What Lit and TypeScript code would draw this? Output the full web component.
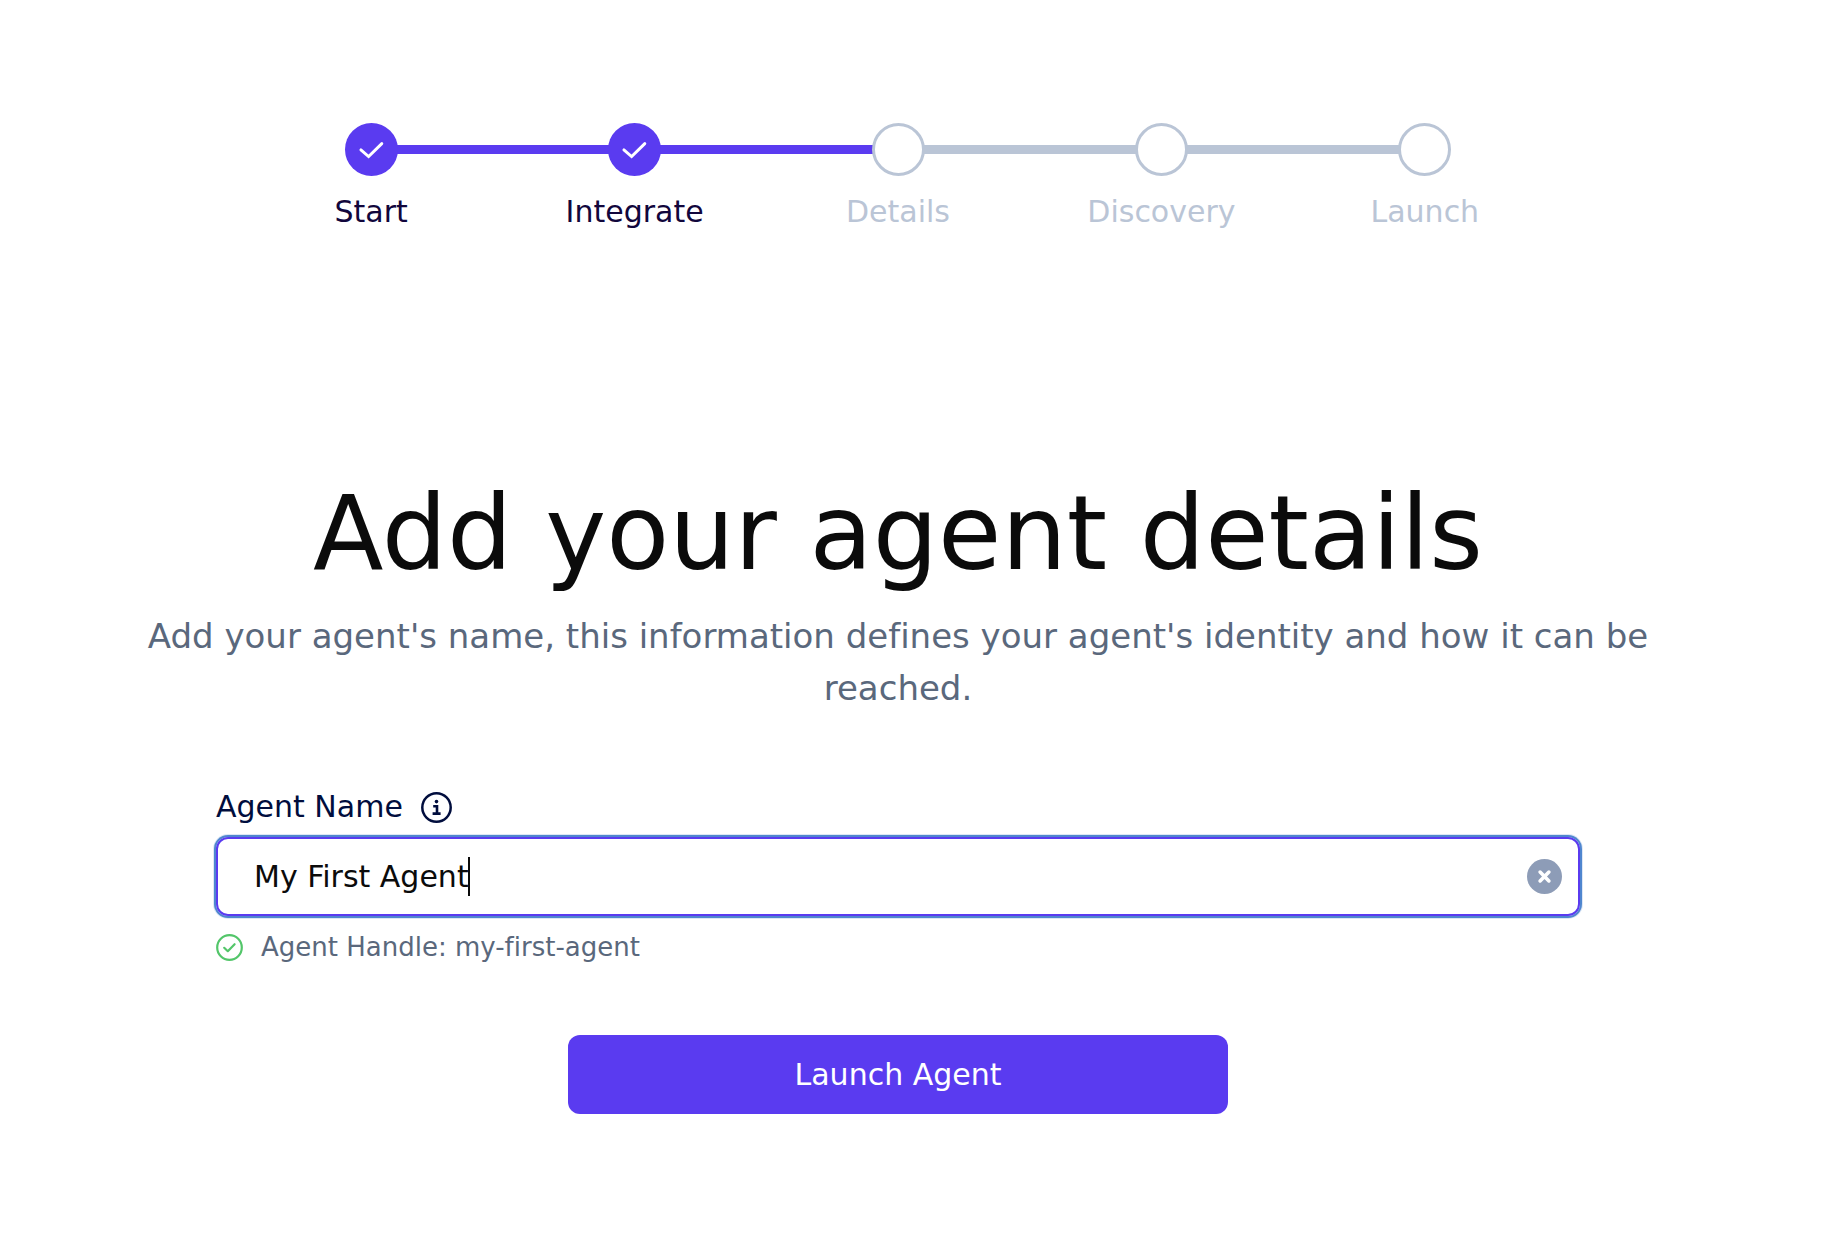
import { LitElement, html, css } from "lit";
import { customElement, state, query } from "lit/decorators.js";
import { classMap } from "lit/directives/class-map.js";
import { styleMap } from "lit/directives/style-map.js";

const FONT = '"DejaVu Sans", sans-serif';

@customElement("step-progress")
export class StepProgress extends LitElement {
  static properties = {
    steps: { attribute: false },
    completed: { type: Number },
  };

  declare steps: string[];
  declare completed: number;

  constructor() {
    super();
    this.steps = [];
    this.completed = 0;
  }

  static styles = css`
    :host {
      display: block;
      width: 100%;
      max-width: 1317px;
    }
    .steps {
      display: flex;
      margin: 0;
      padding: 0;
      list-style: none;
    }
    .step {
      display: flex;
      flex: 1 1 0;
      flex-direction: column;
      gap: 16px;
      min-width: 0;
      color: #bac5d6;
      text-align: center;
    }
    .step.done {
      color: #11063c;
    }
    .track {
      display: flex;
      align-items: center;
    }
    .line {
      flex: 1;
      height: 9px;
      background: #bac5d6;
    }
    .line.filled {
      background: #5a3bf0;
    }
    .line.none {
      background: transparent;
    }
    .dot {
      box-sizing: border-box;
      width: 53px;
      height: 53px;
      margin: 0 -2px;
      border: 3px solid #bac5d6;
      border-radius: 50%;
      background: #fff;
      z-index: 1;
    }
    .done .dot {
      border: 0;
      background: #5a3bf0;
    }
    .dot svg {
      display: block;
      width: 53px;
      height: 53px;
    }
    .name {
      font-size: 30px;
      line-height: 40px;
    }
  `;

  render() {
    const last = this.steps.length - 1;
    return html`
      <ol class="steps">
        ${this.steps.map((name, i) => {
          const done = i < this.completed;
          return html`
            <li class=${classMap({ step: true, done })}>
              <div class="track">
                <span class=${classMap({ line: true, filled: i <= this.completed, none: i === 0 })}></span>
                <span class="dot">
                  ${done
                    ? html`<svg viewBox="0 0 53 53" aria-hidden="true">
                        <path d="M15.9 26.9 23.6 33.6 36.8 20.6" fill="none" stroke="#fff" stroke-width="2.9" stroke-linecap="round" />
                      </svg>`
                    : null}
                </span>
                <span class=${classMap({ line: true, filled: done, none: i === last })}></span>
              </div>
              <span class="name">${name}</span>
            </li>
          `;
        })}
      </ol>
    `;
  }
}

@customElement("app-root")
export class AppRoot extends LitElement {
  @state() private name = "My First Agent";
  @state() private caret = 0;
  @query("input") private field!: HTMLInputElement;

  static styles = css`
    :host {
      display: block;
      background: #fff;
      font-family: "DejaVu Sans", sans-serif;
      font-variant-ligatures: none;
    }
    .page {
      display: flex;
      flex-direction: column;
      align-items: center;
      box-sizing: border-box;
      min-height: 100vh;
      padding: 123px 27px 40px 0;
    }
    .title {
      margin: 241px 0 17px;
      color: #0b0b0b;
      font-size: 103px;
      font-weight: 400;
      line-height: 120px;
      text-align: center;
    }
    .intro {
      max-width: 1540px;
      margin: 0;
      color: #5a687c;
      font-size: 34px;
      line-height: 52px;
      text-align: center;
    }
    .form {
      display: flex;
      flex-direction: column;
      width: 100%;
      max-width: 1364px;
      margin-top: 73px;
    }
    .caption {
      display: flex;
      align-items: center;
      gap: 18px;
      color: #000d3d;
      font-size: 30px;
      line-height: 40px;
    }
    .icon-button {
      display: block;
      padding: 0;
      border: 0;
      background: none;
      color: inherit;
      cursor: pointer;
    }
    .icon-button svg,
    .handle svg {
      display: block;
    }
    .box {
      position: relative;
      display: flex;
      align-items: center;
      box-sizing: border-box;
      height: 79px;
      margin-top: 10px;
      padding: 0 16px 0 36px;
      border: 2px solid #5a3bf0;
      border-radius: 12px;
      box-shadow: 0 0 0 2px #4f86cf, 0 0 0 3px #4f86cf33;
    }
    .input {
      flex: 1;
      min-width: 0;
      height: 60px;
      padding: 0;
      border: 0;
      outline: 0;
      background: none;
      color: #0b0b0b;
      caret-color: transparent;
      font-family: inherit;
      font-size: 30px;
    }
    .caret {
      position: absolute;
      top: 18px;
      width: 2px;
      height: 39px;
      background: #0b0b0b;
      pointer-events: none;
    }
    .handle {
      display: flex;
      align-items: center;
      gap: 18px;
      margin: 13px 0 0;
      color: #5a687c;
      font-size: 26px;
      line-height: 36px;
    }
    .launch {
      align-self: center;
      width: 100%;
      max-width: 660px;
      height: 79px;
      margin-top: 70px;
      padding: 0;
      border: 0;
      border-radius: 12px;
      background: #5a3bf0;
      color: #fff;
      font-family: inherit;
      font-size: 30px;
      cursor: pointer;
    }
  `;

  firstUpdated() {
    this.field.focus();
    this.field.setSelectionRange(this.name.length, this.name.length);
    this.placeCaret();
  }

  private placeCaret() {
    const pen = document.createElement("canvas").getContext("2d")!;
    pen.font = `30px ${FONT}`;
    const before = this.name.slice(0, this.field.selectionStart ?? this.name.length);
    this.caret = 35 + Math.round(pen.measureText(before).width);
  }

  private onInput() {
    this.name = this.field.value;
    this.placeCaret();
  }

  private clear() {
    this.name = "";
    this.field.value = "";
    this.field.focus();
    this.placeCaret();
  }

  private get slug() {
    return this.name.trim().toLowerCase().replace(/\s+/g, "-");
  }

  render() {
    return html`
      <main class="page">
        <step-progress
          .steps=${["Start", "Integrate", "Details", "Discovery", "Launch"]}
          .completed=${2}
        ></step-progress>
        <h1 class="title">Add your agent details</h1>
        <p class="intro">
          Add your agent's name, this information defines your agent's identity and how it can be reached.
        </p>
        <form class="form" @submit=${(e: Event) => e.preventDefault()}>
          <div class="caption">
            <label for="agent-name">Agent Name</label>
            <button class="icon-button" type="button" aria-label="About the agent name">
              <svg width="31" height="31" viewBox="0 0 31 31" fill="none" stroke="currentColor">
                <circle cx="15.5" cy="15.5" r="14.2" stroke-width="2.5" />
                <path d="M12.2 14.3H16V21.6M11.6 21.6H19.6" stroke-width="2.6" />
                <circle cx="15.5" cy="9.6" r="1.8" fill="currentColor" stroke="none" />
              </svg>
            </button>
          </div>
          <div class="box">
            <input
              class="input"
              id="agent-name"
              type="text"
              autocomplete="off"
              spellcheck="false"
              .value=${this.name}
              @input=${this.onInput}
              @keyup=${this.placeCaret}
              @click=${this.placeCaret}
            />
            <span class="caret" style=${styleMap({ left: `${this.caret}px` })}></span>
            <button class="icon-button" type="button" aria-label="Clear" @click=${this.clear}>
              <svg width="35" height="35" viewBox="0 0 35 35">
                <circle cx="17.5" cy="17.5" r="17.5" fill="#8d9cb7" />
                <path d="M13.1 13.1 21.9 21.9M21.9 13.1 13.1 21.9" stroke="#fff" stroke-width="3.6" stroke-linecap="round" />
              </svg>
            </button>
          </div>
          <p class="handle">
            <svg width="27" height="27" viewBox="0 0 27 27" fill="none" stroke="#53c66a" aria-hidden="true">
              <circle cx="13.5" cy="13.5" r="12.3" stroke-width="2.2" />
              <path d="M8.2 13.8 11.8 17.2 18.6 10.2" stroke-width="2.2" stroke-linecap="round" stroke-linejoin="round" />
            </svg>
            <span>Agent Handle: ${this.slug}</span>
          </p>
          <button class="launch" type="submit">Launch Agent</button>
        </form>
      </main>
    `;
  }
}
